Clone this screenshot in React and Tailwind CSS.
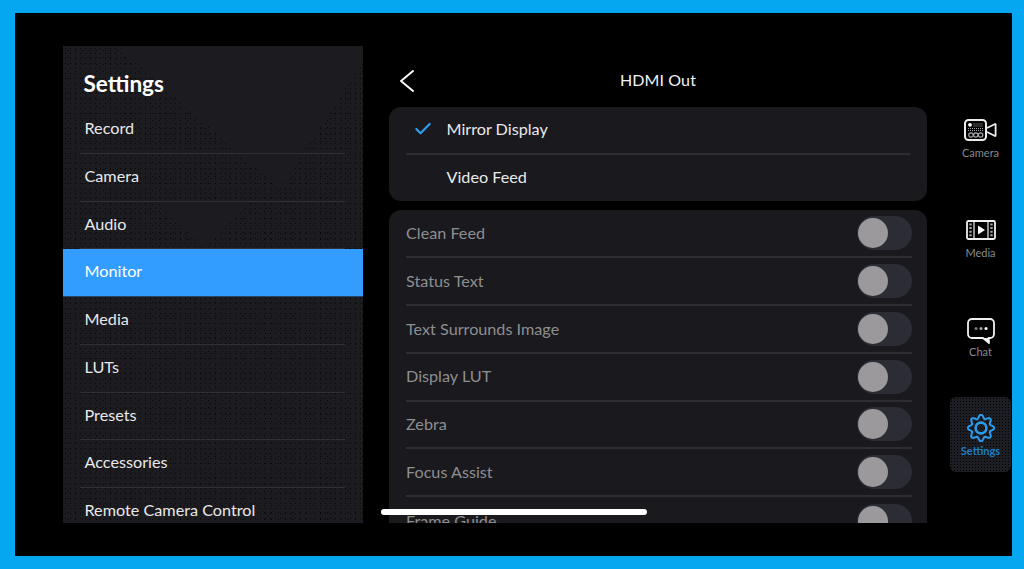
import React from 'react';
import { Check } from 'lucide-react';

const menu = ['Record', 'Camera', 'Audio', 'Monitor', 'Media', 'LUTs', 'Presets', 'Accessories', 'Remote Camera Control'];
const toggles = ['Clean Feed', 'Status Text', 'Text Surrounds Image', 'Display LUT', 'Zebra', 'Focus Assist', 'Frame Guide'];

// scalloped outline for the settings gear
const gearPath = () => {
    const pts = [];
    for (let i = 0; i < 96; i++) {
        const t = (i / 96) * Math.PI * 2;
        const r = 11.4 + 1.8 * Math.cos(8 * t);
        pts.push(`${(14 + r * Math.sin(t)).toFixed(2)} ${(14 - r * Math.cos(t)).toFixed(2)}`);
    }
    return `M${pts.join('L')}Z`;
};

const CameraIcon = () => (
    <svg width="33" height="22" viewBox="0 0 33 22" fill="none">
        <rect x="1" y="1" width="21" height="20" rx="3.5" stroke="#ececee" strokeWidth="2" />
        <circle cx="6" cy="5.8" r="1.9" fill="#fff" />
        <path d="M9.5 5h10M9.5 7h10M4 9.5h15.5M4 11.5h15.5" stroke="#a5a5a9" strokeWidth="1.1" strokeDasharray="1 1" />
        <circle cx="7" cy="16" r="2.2" stroke="#a5a5a9" strokeWidth="1.2" />
        <circle cx="11.8" cy="16" r="2.2" stroke="#a5a5a9" strokeWidth="1.2" />
        <circle cx="16.6" cy="16" r="2.2" stroke="#a5a5a9" strokeWidth="1.2" />
        <path d="M23 9l7.6-3.8a.6.6 0 0 1 1 .5v10.6a.6.6 0 0 1-1 .5L23 13" stroke="#ececee" strokeWidth="1.8" strokeLinejoin="round" />
    </svg>
);

const MediaIcon = () => (
    <svg width="30" height="20" viewBox="0 0 30 20" fill="none">
        <rect x="1" y="1" width="28" height="18" rx="1.5" stroke="#f0f0f1" strokeWidth="1.8" />
        <path d="M8 1v18M22 1v18" stroke="#f0f0f1" strokeWidth="1.2" />
        <path d="M4.5 3.5v13M25.5 3.5v13" stroke="#a5a5a9" strokeWidth="2.4" strokeDasharray="2 1.6" />
        <path d="M12 5.5l7 4.5-7 4.5z" fill="#fff" />
    </svg>
);

const ChatIcon = () => (
    <svg width="28" height="27" viewBox="0 0 28 27" fill="none">
        <path d="M5 1h18a4 4 0 0 1 4 4v11a4 4 0 0 1-4 4h-1.5l.5 5-6-5H5a4 4 0 0 1-4-4V5a4 4 0 0 1 4-4z" stroke="#f2f2f3" strokeWidth="1.8" strokeLinejoin="round" />
        <path d="M22 20l.5 5-6-5z" fill="#f2f2f3" />
        <circle cx="9" cy="10.5" r="1.5" fill="#77777b" />
        <circle cx="14" cy="10.5" r="1.5" fill="#a8a8ab" />
        <circle cx="19" cy="10.5" r="1.5" fill="#ffffff" />
    </svg>
);

const GearIcon = () => (
    <svg width="28" height="28" viewBox="0 0 28 28" fill="none">
        <path d={gearPath()} stroke="#2b9cec" strokeWidth="2" strokeLinejoin="round" />
        <circle cx="14" cy="14" r="5.4" stroke="#2b9cec" strokeWidth="2.6" />
    </svg>
);

const NavItem = ({ icon, label, active, className = '', iconClass = '' }) => (
    <div className={`w-[61px] h-[75px] flex flex-col items-center justify-center rounded-[6px] ${className} ${active ? 'pt-[2px] bg-[#1d1d24] bg-[radial-gradient(#000_0.7px,transparent_0.8px)] bg-[length:3px_3px]' : ''}`}>
        <div className={`h-[27px] flex items-center justify-center ${iconClass}`}>{icon}</div>
        <span className={`text-[11px] leading-[13px] mt-[3px] ${active ? 'text-[#1f7cc4] font-bold' : 'text-[#8a8a8f]'}`}>{label}</span>
    </div>
);

const Toggle = () => (
    <div className="w-[55px] h-[34px] rounded-full bg-[#2c2c34] flex items-center pl-[1px] shrink-0">
        <div className="w-[30px] h-[30px] rounded-full bg-[#9b999c]" />
    </div>
);

export default function App() {
    return (
        <div className="relative w-[1024px] h-[569px] overflow-hidden bg-black border-solid border-[#04a7f0] border-t-[13px] border-b-[13px] border-l-[15px] border-r-[12px] font-['Lato',sans-serif]">
            <div className="flex pt-[33px] pl-[48px] h-[510px]">
                {/* left menu */}
                <div className="w-[300px] h-[477px] shrink-0 overflow-hidden bg-[#1b1b20] bg-[conic-gradient(from_-49deg_at_217px_143px,#1b1b20_0deg_82deg,transparent_82deg),conic-gradient(from_-45deg_at_140px_46px,#1b1b20_0deg_90deg,transparent_90deg),radial-gradient(#08080a_0.6px,transparent_0.8px),radial-gradient(#08080a_0.6px,transparent_0.8px)] bg-[length:100%_100%,300px_46px,5px_5px,7px_7px] bg-[position:0_0,0_155px,0_0,2px_1px] [background-repeat:no-repeat,no-repeat,repeat,repeat]">
                    <div className="h-[60px] pl-[20.5px] flex items-end pb-[8px]">
                        <h1 className="text-[22.5px] leading-[28px] font-bold text-white">Settings</h1>
                    </div>
                    {menu.map((item) => (
                        item === 'Monitor' ? (
                            <div key={item} className="h-[47.75px] pb-[2px] flex items-center pl-[21.5px] text-[16.2px] bg-[#339dff] text-white border-b border-[#24466a]">{item}</div>
                        ) : (
                            <div key={item} className="h-[47.75px] pb-[2px] ml-[17px] mr-[18px] pl-[4.5px] flex items-center text-[16.2px] text-[#e9e9ea] border-b border-[#2f2f35]">{item}</div>
                        )
                    ))}
                </div>

                {/* detail panel */}
                <div className="w-[538px] h-[477px] ml-[26px] shrink-0 overflow-hidden">
                    <div className="h-[61px] pt-[8px] grid grid-cols-[1fr_auto_1fr] items-center">
                        <svg width="16" height="22" viewBox="0 0 16 22" fill="none" className="ml-[10px]">
                            <path d="M14 1L2 11l12 10" stroke="#fff" strokeWidth="1.9" strokeLinecap="round" strokeLinejoin="round" />
                        </svg>
                        <span className="text-[16px] text-[#f2f2f2] tracking-[0.1px] -mt-[1px]">HDMI Out</span>
                    </div>
                    <div className="h-[94px] rounded-[12px] bg-[#19191e] bg-[radial-gradient(#2a2a30_0.5px,transparent_0.7px)] bg-[length:6px_6px] px-[17px]">
                        <div className="h-[48px] pb-[2px] flex items-center border-b-2 border-[#2d2d33]">
                            <div className="w-[40.5px] pl-[7px] flex items-center">
                                <Check size={20} strokeWidth={2.6} className="text-[#2f9df0]" />
                            </div>
                            <span className="text-[16.2px] text-[#e9e9ea]">Mirror Display</span>
                        </div>
                        <div className="h-[46px] pb-[2px] flex items-center pl-[40.5px] text-[16.2px] text-[#e9e9ea]">Video Feed</div>
                    </div>
                    <div className="mt-[9px] pt-[0.5px] rounded-t-[12px] bg-[#19191e] bg-[radial-gradient(#2a2a30_0.5px,transparent_0.7px)] bg-[length:6px_6px] pl-[17px] pr-[15px]">
                        {toggles.map((label, i) => (
                            <div key={label} className={`h-[47.75px] flex items-center justify-between ${i < toggles.length - 1 ? 'border-b-2 border-[#2d2d33]' : ''}`}>
                                <span className="text-[16.2px] text-[#8e8e91]">{label}</span>
                                <Toggle />
                            </div>
                        ))}
                    </div>
                </div>

                {/* right nav */}
                <div className="w-[61px] ml-[23px] shrink-0 pt-[54px]">
                    <NavItem icon={<CameraIcon />} label="Camera" />
                    <NavItem icon={<MediaIcon />} label="Media" className="mt-[25px]" />
                    <NavItem icon={<ChatIcon />} label="Chat" className="mt-[24px]" iconClass="translate-y-[3px]" />
                    <NavItem icon={<GearIcon />} label="Settings" active className="mt-[23px]" />
                </div>
            </div>

            {/* home indicator */}
            <div className="absolute left-[366px] top-[496px] w-[266px] h-[6px] rounded-full bg-white" />
        </div>
    );
}
